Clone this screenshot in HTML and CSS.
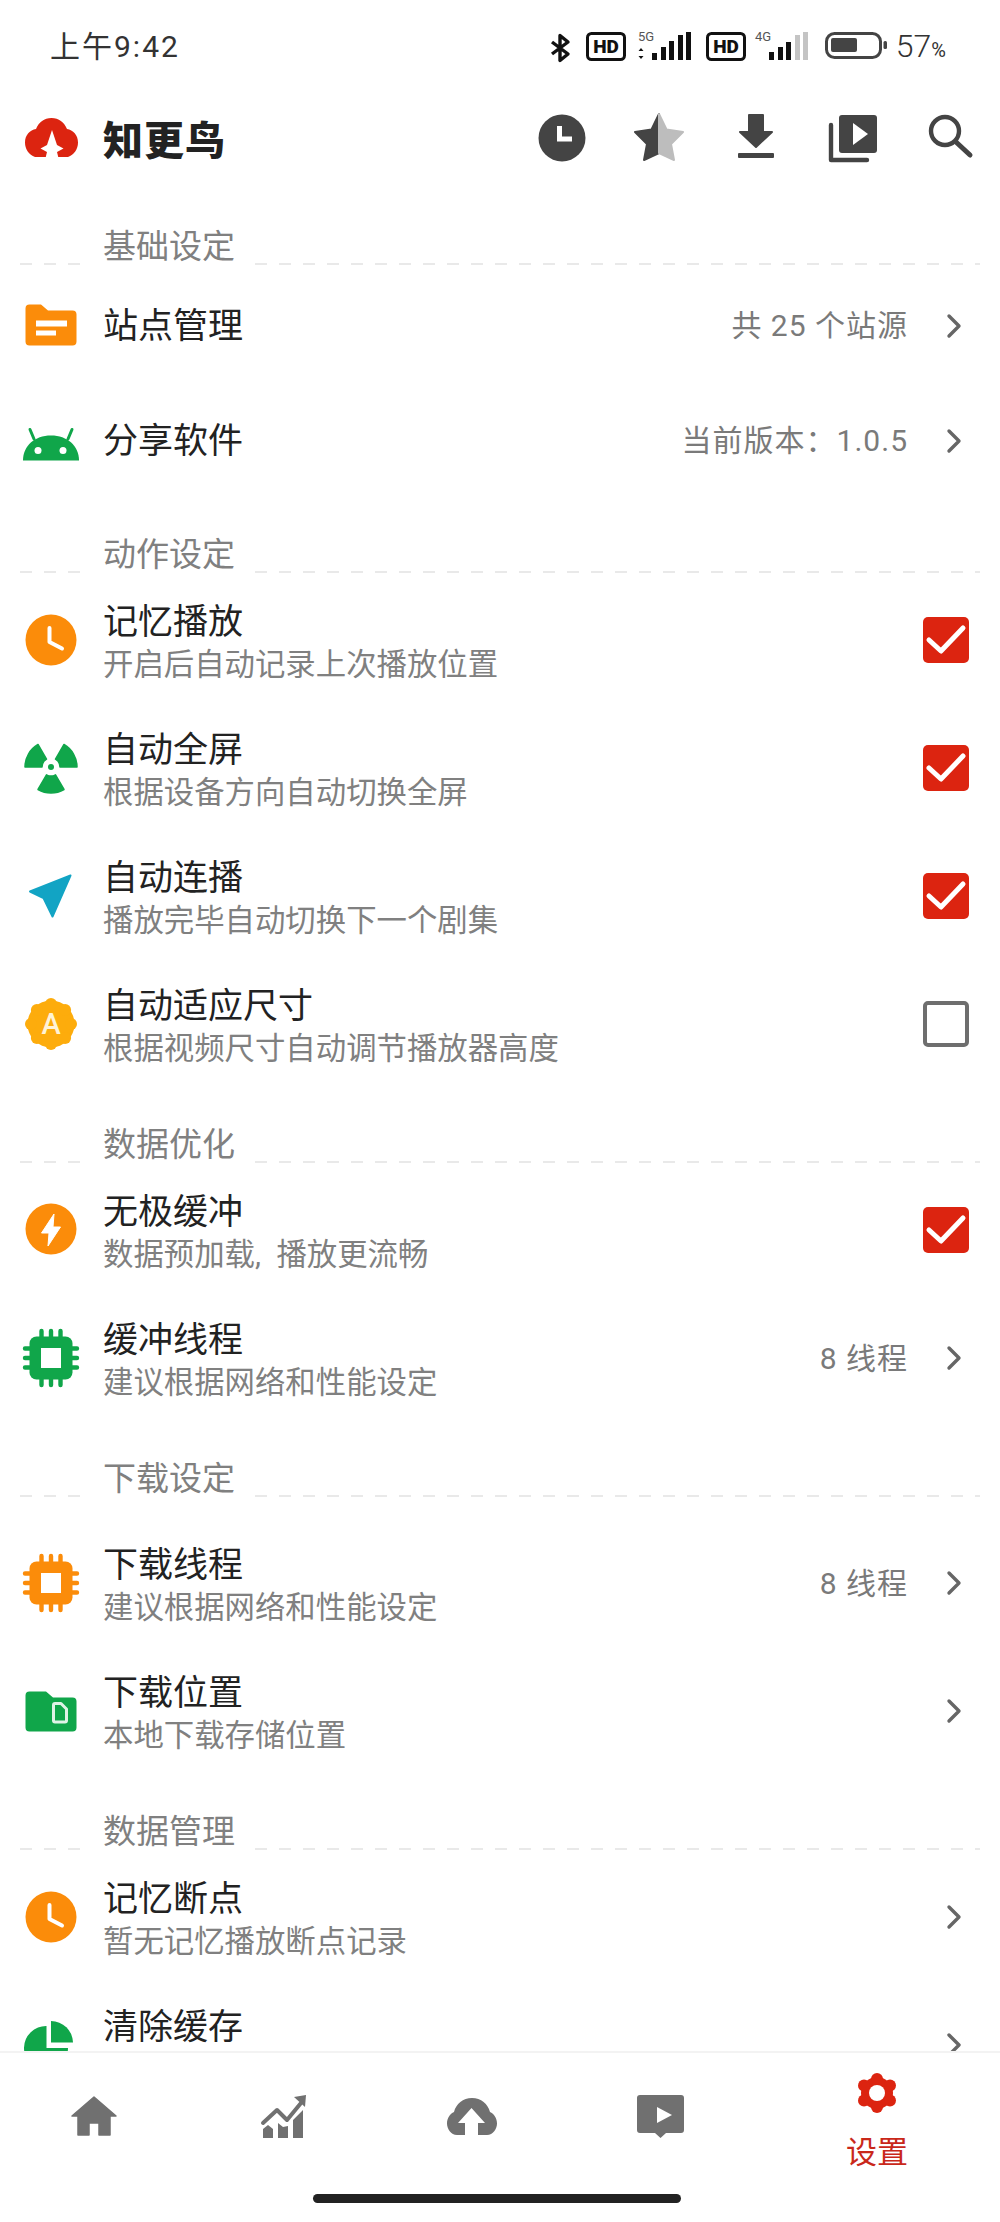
FILE: index.html
```html
<!DOCTYPE html>
<html lang="zh-CN">
<head>
    <meta charset="UTF-8">
    <meta name="viewport" content="width=device-width, initial-scale=1.0">
    <title>知更鸟 - 设置</title>
    <link rel="stylesheet" href="styles.css">
</head>

<body>
<svg class="icon-defs" xmlns="http://www.w3.org/2000/svg">
    <symbol id="chevron" viewBox="0 0 16 26">
        <polyline points="3,3 13,13 3,23" fill="none" stroke="currentColor" stroke-width="3.4" stroke-linecap="round" stroke-linejoin="round"/>
    </symbol>
    <symbol id="check" viewBox="0 0 46 46">
        <polyline points="6,23 18,34 40,11" fill="none" stroke="#fff" stroke-width="5" stroke-linecap="round" stroke-linejoin="round"/>
    </symbol>
    <symbol id="clock" viewBox="0 0 60 60">
        <circle cx="31" cy="30" r="25.5" fill="currentColor"/>
        <polyline points="29.5,18 29.5,32 42,38.5" fill="none" stroke="#fff" stroke-width="4" stroke-linecap="round" stroke-linejoin="round"/>
    </symbol>
    <symbol id="chip" viewBox="0 0 60 60">
        <path d="M21.5 3v8M31 3v8M40.5 3v8M21.5 49v8M31 49v8M40.5 49v8M5 20.5h8M5 30h8M5 39.5h8M49 20.5h8M49 30h8M49 39.5h8" stroke="currentColor" stroke-width="4.4" stroke-linecap="round"/>
        <rect x="9.5" y="8.5" width="43" height="43" rx="7" fill="currentColor"/>
        <rect x="21" y="20" width="20" height="20" fill="#fff"/>
    </symbol>
</svg>

<div class="status-bar">
    <span class="status-time">上午9:42</span>
    <div class="status-right">
        <svg class="status-icons" viewBox="550 30 340 34" xmlns="http://www.w3.org/2000/svg">
            <polyline points="552,42 568,54 560,60.5 560,35.5 568,42 552,54" fill="none" stroke="#111" stroke-width="3.4" stroke-linejoin="round"/>
            <rect x="587.5" y="33.5" width="37" height="26" rx="4" fill="none" stroke="#111" stroke-width="3"/>
            <text x="606" y="52.5" class="hd-text">HD</text>
            <text x="638" y="40.5" class="net-text">5G</text>
            <path d="M641 48l2.5 3h-5zM641 59l-2.5-3h5z" fill="#111"/>
            <path d="M652 53h5v7h-5zM661 47h5v13h-5zM669 41h5v19h-5zM678 35h5v25h-5zM686 32h5v28h-5z" fill="#111"/>
            <rect x="707.5" y="33.5" width="37" height="26" rx="4" fill="none" stroke="#111" stroke-width="3"/>
            <text x="726" y="52.5" class="hd-text">HD</text>
            <text x="755" y="40.5" class="net-text">4G</text>
            <path d="M769 52h5v8h-5zM778 47h5v13h-5zM786 42h5v18h-5z" fill="#111"/>
            <path d="M795 35h5v25h-5zM803 32h5v28h-5z" fill="#c4c4c4"/>
            <rect x="826.5" y="33.5" width="54" height="24" rx="8" fill="none" stroke="#444" stroke-width="3"/>
            <rect x="831" y="38" width="26" height="14" rx="2" fill="#444"/>
            <rect x="883.5" y="41" width="3.5" height="8" rx="1.5" fill="#444"/>
        </svg>
        <span class="battery-text">57<small>%</small></span>
    </div>
</div>

<div class="app-bar">
    <svg class="logo" viewBox="0 0 54 40">
        <path d="M11 39C5 37 1 31 1 24.5C1 17 6 12 12 11C15 4 20 0 27.5 0C35 0 40 4 43 11C49 12 54 17 54 24.5C54 31 50 37 44 39Z" fill="currentColor"/>
        <polygon points="28,12 32,24 33,27 39.5,30.5 33,34 34.5,40 21.5,40 23,34 16.5,30.5 23,27 24,24" fill="#fff"/>
    </svg>
    <span class="app-title">知更鸟</span>
    <div class="app-actions">
        <svg class="action-icon" viewBox="0 0 60 60">
            <circle cx="30" cy="30" r="23.5" fill="currentColor"/>
            <polyline points="27.5,18 27.5,31 40,31" fill="none" stroke="#fff" stroke-width="5"/>
        </svg>
        <svg class="action-icon" viewBox="0 0 60 60">
            <path d="M30 6L22.5 21.5L6 24L18 36L15 52L30 45Z" fill="currentColor" stroke="currentColor" stroke-width="2" stroke-linejoin="round"/>
            <path d="M30 6L37.5 21.5L54 24L42 36L45 52L30 45Z" fill="#bdbdbd" stroke="#bdbdbd" stroke-width="2" stroke-linejoin="round"/>
        </svg>
        <svg class="action-icon" viewBox="0 0 60 60">
            <path d="M23 7H37V24H46L30 39L14 24H23Z" fill="currentColor" stroke="currentColor" stroke-width="2" stroke-linejoin="round"/>
            <rect x="12" y="45" width="36" height="5" rx="1" fill="currentColor"/>
        </svg>
        <svg class="action-icon" viewBox="0 0 60 60">
            <rect x="16" y="7" width="38" height="38" rx="3" fill="currentColor"/>
            <polygon points="30,15 45,26 30,37" fill="#fff"/>
            <polyline points="8,17 8,52 44,52" fill="none" stroke="currentColor" stroke-width="4.4" stroke-linecap="round" stroke-linejoin="round"/>
        </svg>
        <svg class="action-icon" viewBox="0 0 60 60">
            <circle cx="25" cy="23" r="14" fill="none" stroke="currentColor" stroke-width="4.4"/>
            <line x1="36" y1="34" x2="50" y2="47" stroke="currentColor" stroke-width="5" stroke-linecap="round"/>
        </svg>
    </div>
</div>

<div class="settings">
    <div class="section">
        <div class="section-head"><span class="dash dash-left"></span><span class="section-label">基础设定</span><span class="dash"></span></div>
        <div class="rows">
            <div class="row row-plain">
                <svg class="row-icon" viewBox="0 0 60 60">
                    <path d="M9.5 8.5H21L28 14.5H52.5A4 4 0 0 1 56.5 18.5V45.5A4 4 0 0 1 52.5 49.5H9.5A4 4 0 0 1 5.5 45.5V12.5A4 4 0 0 1 9.5 8.5Z" fill="#fb8c0a"/>
                    <rect x="16" y="24.5" width="31" height="6" fill="#fff"/>
                    <rect x="16" y="34.5" width="20" height="5" fill="#fff"/>
                </svg>
                <div class="row-text"><div class="row-title">站点管理</div></div>
                <span class="row-value">共 25 个站源</span>
                <svg class="chevron"><use href="#chevron"/></svg>
            </div>
            <div class="row row-plain">
                <svg class="row-icon" viewBox="0 0 60 60">
                    <path d="M14 28L10 18.5M48 28L52 18.5" stroke="#10a64a" stroke-width="3" stroke-linecap="round"/>
                    <path d="M3 49.5C3 35 14.5 24.5 31 24.5C47.5 24.5 59 35 59 49.5Z" fill="#10a64a"/>
                    <circle cx="18" cy="39.5" r="3.5" fill="#fff"/>
                    <circle cx="43" cy="39.5" r="3.5" fill="#fff"/>
                </svg>
                <div class="row-text"><div class="row-title">分享软件</div></div>
                <span class="row-value">当前版本：1.0.5</span>
                <svg class="chevron"><use href="#chevron"/></svg>
            </div>
        </div>
    </div>

    <div class="section">
        <div class="section-head"><span class="dash dash-left"></span><span class="section-label">动作设定</span><span class="dash"></span></div>
        <div class="rows">
            <div class="row">
                <svg class="row-icon orange"><use href="#clock"/></svg>
                <div class="row-text">
                    <div class="row-title">记忆播放</div>
                    <div class="row-sub">开启后自动记录上次播放位置</div>
                </div>
                <span class="checkbox checked"><svg><use href="#check"/></svg></span>
            </div>
            <div class="row">
                <svg class="row-icon" viewBox="0 0 60 60">
                    <path d="M5 29A26 26 0 0 1 18 6.5L26.5 21.2A9 9 0 0 0 22 29Z" fill="#10a64a" stroke="#10a64a" stroke-width="1.5" stroke-linejoin="round"/>
                    <path d="M57 29A26 26 0 0 0 44 6.5L35.5 21.2A9 9 0 0 1 40 29Z" fill="#10a64a" stroke="#10a64a" stroke-width="1.5" stroke-linejoin="round"/>
                    <path d="M18 51.5A26 26 0 0 0 44 51.5L35.5 36.8A9 9 0 0 1 26.5 36.8Z" fill="#10a64a" stroke="#10a64a" stroke-width="1.5" stroke-linejoin="round"/>
                    <circle cx="31" cy="29" r="3" fill="#10a64a"/>
                </svg>
                <div class="row-text">
                    <div class="row-title">自动全屏</div>
                    <div class="row-sub">根据设备方向自动切换全屏</div>
                </div>
                <span class="checkbox checked"><svg><use href="#check"/></svg></span>
            </div>
            <div class="row">
                <svg class="row-icon" viewBox="0 0 60 60">
                    <polygon points="50.5,9.5 10,25.5 23.5,32 32.5,50.5" fill="#12a4c4" stroke="#12a4c4" stroke-width="2" stroke-linejoin="round"/>
                </svg>
                <div class="row-text">
                    <div class="row-title">自动连播</div>
                    <div class="row-sub">播放完毕自动切换下一个剧集</div>
                </div>
                <span class="checkbox checked"><svg><use href="#check"/></svg></span>
            </div>
            <div class="row">
                <svg class="row-icon" viewBox="0 0 60 60">
                    <g fill="#fdac0c">
                        <circle cx="31" cy="30" r="23.5"/>
                        <circle cx="31" cy="10" r="6"/>
                        <circle cx="45.1" cy="15.9" r="6"/>
                        <circle cx="51" cy="30" r="6"/>
                        <circle cx="45.1" cy="44.1" r="6"/>
                        <circle cx="31" cy="50" r="6"/>
                        <circle cx="16.900" cy="44.1" r="6"/>
                        <circle cx="11" cy="30" r="6"/>
                        <circle cx="16.900" cy="15.9" r="6"/>
                    </g>
                    <text x="31" y="40" class="badge-text">A</text>
                </svg>
                <div class="row-text">
                    <div class="row-title">自动适应尺寸</div>
                    <div class="row-sub">根据视频尺寸自动调节播放器高度</div>
                </div>
                <span class="checkbox"></span>
            </div>
        </div>
    </div>

    <div class="section">
        <div class="section-head"><span class="dash dash-left"></span><span class="section-label">数据优化</span><span class="dash"></span></div>
        <div class="rows">
            <div class="row">
                <svg class="row-icon" viewBox="0 0 60 60">
                    <circle cx="31" cy="29" r="25.5" fill="#fb8c0a"/>
                    <polygon points="34,14 21.5,33 29,33 28,46 40.5,27 33,27" fill="#fff" stroke="#fff" stroke-width="1" stroke-linejoin="round"/>
                </svg>
                <div class="row-text">
                    <div class="row-title">无极缓冲</div>
                    <div class="row-sub">数据预加载,&ensp;播放更流畅</div>
                </div>
                <span class="checkbox checked"><svg><use href="#check"/></svg></span>
            </div>
            <div class="row">
                <svg class="row-icon green"><use href="#chip"/></svg>
                <div class="row-text">
                    <div class="row-title">缓冲线程</div>
                    <div class="row-sub">建议根据网络和性能设定</div>
                </div>
                <span class="row-value">8 线程</span>
                <svg class="chevron"><use href="#chevron"/></svg>
            </div>
        </div>
    </div>

    <div class="section">
        <div class="section-head"><span class="dash dash-left"></span><span class="section-label">下载设定</span><span class="dash"></span></div>
        <div class="rows rows-loose">
            <div class="row">
                <svg class="row-icon orange"><use href="#chip"/></svg>
                <div class="row-text">
                    <div class="row-title">下载线程</div>
                    <div class="row-sub">建议根据网络和性能设定</div>
                </div>
                <span class="row-value">8 线程</span>
                <svg class="chevron"><use href="#chevron"/></svg>
            </div>
            <div class="row">
                <svg class="row-icon" viewBox="0 0 60 60">
                    <path d="M9.5 10.5H26L33 16.5H52.5A4 4 0 0 1 56.5 20.5V46.5A4 4 0 0 1 52.5 50.5H9.5A4 4 0 0 1 5.5 46.5V14.5A4 4 0 0 1 9.5 10.5Z" fill="#10a64a"/>
                    <path d="M35 22.5H41L46.5 28V39.5A1.5 1.5 0 0 1 45 41H35A1.5 1.5 0 0 1 33.5 39.5V24A1.5 1.5 0 0 1 35 22.5Z" fill="none" stroke="#dff3e6" stroke-width="3" stroke-linejoin="round"/>
                </svg>
                <div class="row-text">
                    <div class="row-title">下载位置</div>
                    <div class="row-sub">本地下载存储位置</div>
                </div>
                <svg class="chevron"><use href="#chevron"/></svg>
            </div>
        </div>
    </div>

    <div class="section">
        <div class="section-head"><span class="dash dash-left"></span><span class="section-label">数据管理</span><span class="dash"></span></div>
        <div class="rows">
            <div class="row">
                <svg class="row-icon orange"><use href="#clock"/></svg>
                <div class="row-text">
                    <div class="row-title">记忆断点</div>
                    <div class="row-sub">暂无记忆播放断点记录</div>
                </div>
                <svg class="chevron"><use href="#chevron"/></svg>
            </div>
            <div class="row">
                <svg class="row-icon" viewBox="0 0 60 60">
                    <path d="M26.5 11A22 22 0 1 0 48 33H26.5Z" fill="#10a64a"/>
                    <path d="M31 6A22 22 0 0 1 53 27.5H31Z" fill="#10a64a"/>
                </svg>
                <div class="row-text">
                    <div class="row-title">清除缓存</div>
                    <div class="row-sub"></div>
                </div>
                <svg class="chevron"><use href="#chevron"/></svg>
            </div>
        </div>
    </div>
</div>

<div class="bottom-nav">
    <div class="nav-items">
        <div class="nav-item">
            <svg class="nav-icon" viewBox="0 0 60 60">
                <path d="M30 11L8 30H14V49H25V37H35V49H46V30H52Z" fill="currentColor" stroke="currentColor" stroke-width="1.5" stroke-linejoin="round"/>
            </svg>
        </div>
        <div class="nav-item">
            <svg class="nav-icon" viewBox="0 0 60 60">
                <path d="M10 37L24 24L34 34L48 17" fill="none" stroke="currentColor" stroke-width="4" stroke-linecap="round" stroke-linejoin="round"/>
                <polygon points="41,11 53,9 52,21" fill="currentColor"/>
                <path d="M10 43L15 39L20 43V52H10ZM25 37L30 41L35 40V52H25ZM40 34L50 24V52H40Z" fill="currentColor"/>
            </svg>
        </div>
        <div class="nav-item">
            <svg class="nav-icon" viewBox="0 0 60 60">
                <path d="M16 49C10 49 6 43 6 37.5C6 32 9 28 13 26C15 18 22 12 31 12C40 12 47 18 49 26C53 28 56 32 56 37.5C56 43 52 49 46 49Z" fill="currentColor"/>
                <polygon points="30.5,22 44,37 37,37 37,50 24,50 24,37 17,37" fill="#fff"/>
            </svg>
        </div>
        <div class="nav-item">
            <svg class="nav-icon" viewBox="0 0 60 60">
                <path d="M10 9H51A3 3 0 0 1 54 12V44A3 3 0 0 1 51 47H36L30.5 52L25 47H10A3 3 0 0 1 7 44V12A3 3 0 0 1 10 9Z" fill="currentColor"/>
                <polygon points="27,21 42,29 27,37" fill="#fff"/>
            </svg>
        </div>
        <div class="nav-item nav-item-active">
            <svg class="nav-icon" viewBox="0 0 60 60">
                <circle cx="30" cy="30" r="16" fill="currentColor"/>
                <circle cx="30" cy="16" r="6" fill="currentColor"/>
                <circle cx="30" cy="44" r="6" fill="currentColor"/>
                <circle cx="17" cy="22.5" r="6" fill="currentColor"/>
                <circle cx="43" cy="22.5" r="6" fill="currentColor"/>
                <circle cx="17" cy="37.5" r="6" fill="currentColor"/>
                <circle cx="43" cy="37.5" r="6" fill="currentColor"/>
                <circle cx="30" cy="30" r="8" fill="#fff"/>
            </svg>
            <span class="nav-label">设置</span>
        </div>
    </div>
    <div class="home-bar"></div>
</div>
</body>
</html>
```

FILE: styles.css
```css
* {
    margin: 0;
    padding: 0;
    box-sizing: border-box;
}

body {
    width: 1000px;
    height: 2222px;
    display: flex;
    flex-direction: column;
    overflow: hidden;
    background-color: #fff;
    color: #222;
    font-family: Roboto, "Noto Sans CJK SC", sans-serif;
}

.icon-defs {
    display: none;
}

/* status bar */
.status-bar {
    height: 88px;
    padding: 6px 54px 0 50px;
    display: flex;
    justify-content: space-between;
    align-items: center;
    flex-shrink: 0;
}

.status-time {
    margin-bottom: 6px;
    font-size: 30px;
    letter-spacing: 2px;
    color: #333;
}

.status-right {
    display: flex;
    align-items: center;
}

.status-icons {
    width: 340px;
    height: 34px;
    margin-right: 6px;
}

.hd-text {
    font-size: 19px;
    font-weight: 900;
    text-anchor: middle;
    fill: #111;
}

.net-text {
    font-size: 13px;
    fill: #555;
}

.battery-text {
    margin-bottom: 2px;
    font-size: 32px;
    font-weight: 300;
    color: #333;
}

.battery-text small {
    font-size: 20px;
    font-weight: 400;
}

/* top app bar */
.app-bar {
    height: 100px;
    padding: 0 20px 0 24px;
    display: flex;
    align-items: center;
    flex-shrink: 0;
}

.logo {
    width: 54px;
    height: 40px;
    color: #dc2410;
}

.app-title {
    margin-left: 25px;
    font-size: 40px;
    font-weight: 900;
    letter-spacing: 1px;
    color: #222;
}

.app-actions {
    margin-left: auto;
    display: flex;
    gap: 37px;
}

.action-icon {
    width: 60px;
    height: 60px;
    color: #444;
}

/* settings list */
.settings {
    flex: 1;
    min-height: 0;
    overflow: hidden;
    padding-top: 2px;
}

.section {
    margin-top: 25px;
}

.section-head {
    height: 50px;
    display: flex;
    align-items: flex-end;
}

.dash {
    flex: 1;
    height: 2px;
    margin-right: 20px;
    background: repeating-linear-gradient(to right, #e9e9e9 0 12px, transparent 12px 24px);
}

.dash-left {
    flex: none;
    width: 60px;
    margin: 0 0 0 20px;
}

.section-label {
    width: 175px;
    padding-left: 23px;
    font-size: 33px;
    line-height: 36px;
    color: #808080;
}

.rows {
    padding-top: 3px;
}

.rows-loose {
    padding-top: 22px;
}

.row {
    height: 128px;
    padding: 0 31px 0 20px;
    display: flex;
    align-items: center;
}

.row-plain {
    height: 115px;
}

.row-plain .row-text {
    padding-top: 3px;
}

.row-icon {
    width: 60px;
    height: 60px;
    flex-shrink: 0;
}

.orange {
    color: #fb8c0a;
}

.green {
    color: #10a64a;
}

.row-text {
    flex: 1;
    margin-left: 23px;
}

.row-title {
    font-size: 35px;
    line-height: 44px;
    color: #222;
}

.row-title:not(:last-child) {
    margin-bottom: -2px;
}

.row-sub {
    height: 44px;
    margin-bottom: -8px;
    font-size: 30.4px;
    line-height: 44px;
    color: #808080;
}

.row-value {
    margin-bottom: 5px;
    font-size: 30px;
    letter-spacing: 1px;
    color: #7a7a7a;
}

.chevron {
    width: 16px;
    height: 26px;
    margin: 0 7px 0 38px;
    flex-shrink: 0;
    color: #666;
}

.checkbox {
    width: 46px;
    height: 46px;
    flex-shrink: 0;
    border: 4px solid #6e6e6e;
    border-radius: 5px;
}

.checkbox.checked {
    border: none;
    background-color: #dc2410;
}

.checkbox svg {
    display: block;
    width: 46px;
    height: 46px;
}

.badge-text {
    font-size: 29px;
    font-weight: 500;
    text-anchor: middle;
    fill: #fff3d6;
}

/* bottom navigation */
.bottom-nav {
    height: 171px;
    flex-shrink: 0;
    display: flex;
    flex-direction: column;
    border-top: 2px solid #f3f3f3;
    background-color: #fff;
}

.nav-items {
    display: grid;
    grid-template-columns: repeat(4, 188.5px) 1fr;
}

.nav-item {
    padding-top: 33px;
    display: flex;
    flex-direction: column;
    align-items: center;
    color: #707070;
}

.nav-item-active {
    padding-top: 10px;
    color: #dc2410;
}

.nav-icon {
    width: 60px;
    height: 60px;
}

.nav-label {
    margin-top: 10px;
    font-size: 31px;
    line-height: 40px;
    color: #c9281a;
}

.home-bar {
    width: 368px;
    height: 9px;
    margin: auto 0 19px 313px;
    border-radius: 5px;
    background-color: #222;
}
```
